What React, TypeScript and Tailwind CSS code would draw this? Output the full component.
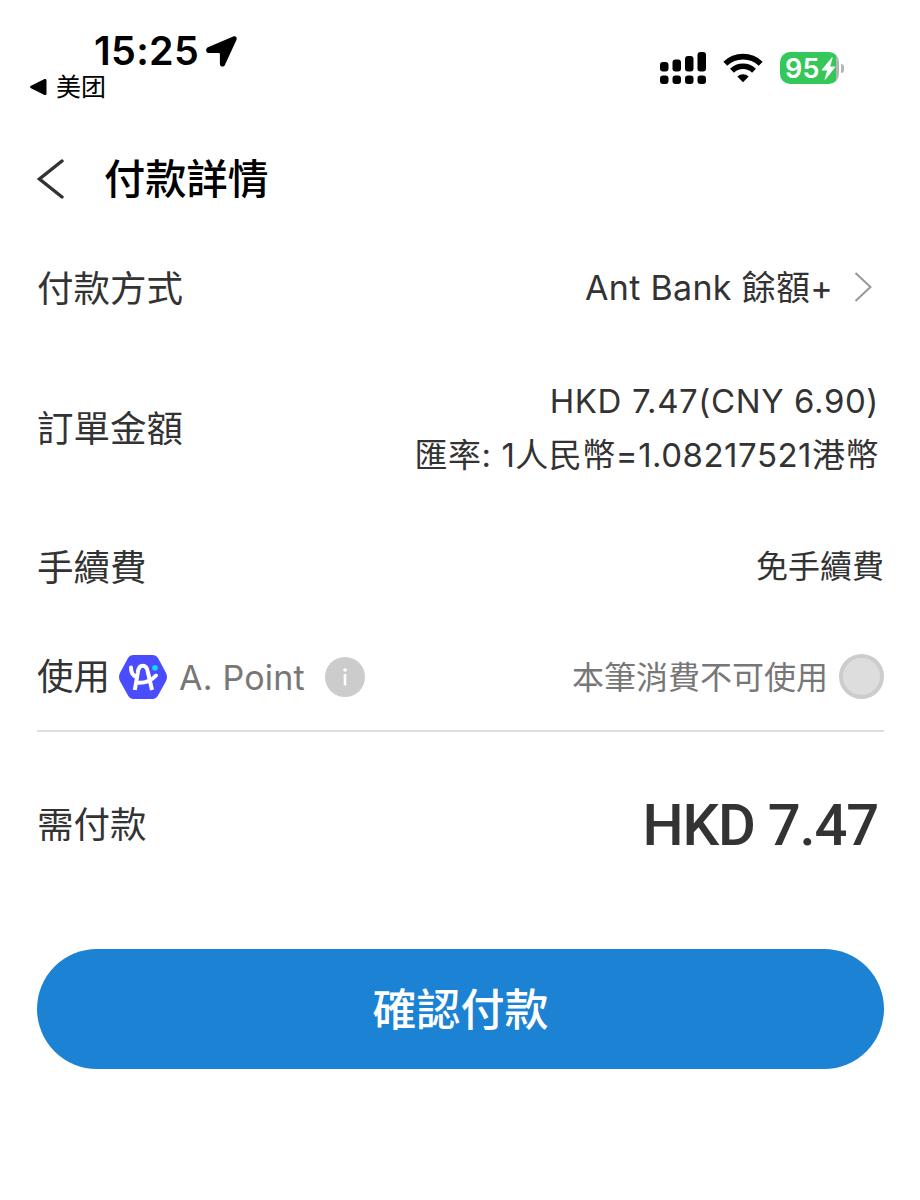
import type { ReactNode } from 'react';

function StatusBar() {
  return (
    <header className="flex h-[120px] justify-between pl-[30px] pr-[76px] text-black">
      <div className="pt-[31px]">
        <div className="flex h-10 items-center gap-[8px] pl-[64px]">
          <span className="w-[104px] whitespace-nowrap text-[39.5px] font-semibold leading-10 tracking-[0.3px]">15:25</span>
          <svg width="31" height="31" viewBox="0 0 31 31" fill="currentColor">
            <path d="M27.2.5 2 11.2C-.8 12.6-.3 17 2.6 17H12.6c.8 0 1.300.5 1.300 1.300V28c0 3 3.900 3.400 5 .9L30.500 3.800C31.400 1.500 29.800-.5 27.200.5Z" />
          </svg>
        </div>
        <div className="flex h-8 items-center gap-[9px]">
          <svg width="17" height="18" viewBox="0 0 17 18" fill="currentColor">
            <path d="M1 7.8 14 1.2c1.5-.7 2.5 0 2.5 1.4v12.8c0 1.4-1 2.1-2.5 1.4L1 10.2C-.2 9.6-.2 8.4 1 7.8Z" />
          </svg>
          <span className="-mt-[4px] font-['Noto_Sans_CJK_SC',sans-serif] text-[25px] leading-8">美团</span>
        </div>
      </div>
      <div className="flex h-[136px] items-center">
        <svg width="46" height="32" viewBox="0 0 46 32" fill="currentColor">
          <rect x="0" y="10" width="8.5" height="9.5" rx="3" />
          <rect x="12.5" y="7.5" width="8.5" height="12" rx="3" />
          <rect x="25" y="4" width="8.5" height="15.5" rx="3" />
          <rect x="37.5" y="0" width="8.5" height="19.5" rx="3" />
          <rect x="0" y="23.5" width="8.5" height="8.5" rx="3" />
          <rect x="12.5" y="23.5" width="8.5" height="8.5" rx="3" />
          <rect x="25" y="23.5" width="8.5" height="8.5" rx="3" />
          <rect x="37.5" y="23.5" width="8.5" height="8.5" rx="3" />
        </svg>
        <svg className="ml-[17px]" width="40" height="30" viewBox="0 0 40 30">
          <g fill="none" stroke="currentColor" strokeWidth="5.6">
            <path d="M2.3 10.8A25.5 25.5 0 0 1 37.7 10.8" />
            <path d="M9 17.7A15.8 15.8 0 0 1 31 17.7" />
          </g>
          <path d="M20 29.3 14.3 23.6A8.2 8.2 0 0 1 25.7 23.6Z" fill="currentColor" />
        </svg>
        <div className="ml-[17px] flex h-8 w-[59px] items-center rounded-[10px] bg-[linear-gradient(to_right,#34c759_95%,#b5b5b5_95%)] pl-[5px] text-white">
          <span className="pt-px text-[27px] font-semibold leading-8 tracking-[0.2px]">95</span>
          <svg className="ml-[1px] shrink-0" width="15" height="23" viewBox="0 0 15 23" fill="currentColor">
            <path d="M10.8.6 1 12.4c-.5.7-.3 1.1.4 1.1h4.7L3.7 21.8c-.3 1 .4 1.2 1 .5l9.4-11.7c.5-.7.3-1.1-.4-1.1H9.2l2.4-8.4c.2-.8-.3-1-.8-.5Z" />
          </svg>
        </div>
        <span className="ml-[2px] h-[9px] w-[3px] rounded-r-full bg-[#b5b5b5]" />
      </div>
    </header>
  );
}

function Label({ children }: { children: ReactNode }) {
  return <span className="pt-px text-[36.5px] leading-[54px] text-[#333]">{children}</span>;
}

function PointLogo() {
  return (
    <svg width="48" height="44" viewBox="0 0 48 44">
      <path
        d="M14.5 0h19c2.4 0 4.3 1 5.5 3l7.8 14.5c1.6 3 1.6 6 0 9L39 40.5c-1.2 2.2-3.1 3.5-5.5 3.5h-19c-2.4 0-4.3-1.3-5.5-3.5L1.2 26.5c-1.6-3-1.6-6 0-9L9 3c1.2-2 3.1-3 5.5-3Z"
        fill="#494cff"
      />
      <g fill="none" stroke="#fff" strokeWidth="4" strokeLinejoin="round">
        <path d="M12 12.5c0 5 2 8.7 6 9.3" strokeLinecap="round" />
        <path d="M15.8 35 18.8 17.500C20 8.500 27.500 8.500 29 17.500L33 35" />
        <path d="M18.500 27.800C25.500 28.300 32.500 25.500 37 20.500" strokeLinecap="round" />
      </g>
      <circle cx="36" cy="12.8" r="2.9" fill="#19d3f5" />
    </svg>
  );
}

export default function App() {
  return (
    <main className="h-[1200px] w-[920px] bg-white font-['Inter','Noto_Sans_CJK_TC',sans-serif]">
      <StatusBar />

      <div className="flex h-[118px] items-center pl-[37px]">
        <svg width="27" height="40" viewBox="0 0 27 40" fill="none" stroke="#333" strokeWidth="3.4" strokeLinecap="round">
          <path d="M25 2 2.5 20 25 38" />
        </svg>
        <h1 className="ml-[40px] text-[41.2px] font-medium leading-[60px] text-black">付款詳情</h1>
      </div>

      <section className="pl-[37px] pr-[36px]">
        <div className="flex h-[100px] items-center justify-between">
          <Label>付款方式</Label>
          <div className="flex items-center gap-[21px] pr-[12px] text-[#333]">
            <span className="text-[34px] leading-[54px] tracking-[0.3px]">Ant Bank 餘額+</span>
            <svg className="-mt-[2px]" width="18" height="30" viewBox="0 0 18 30" fill="none" stroke="#999" strokeWidth="2">
              <path d="M1.5 1 16.5 15 1.5 29" />
            </svg>
          </div>
        </div>

        <div className="flex h-[180px] items-center justify-between">
          <Label>訂單金額</Label>
          <div className="flex flex-col items-end pr-[5px] text-[33px] leading-[54px] text-[#333]">
            <span className="tracking-[0.6px]">HKD 7.47(CNY 6.90)</span>
            <span className="tracking-[0.5px]">匯率: 1人民幣=1.08217521港幣</span>
          </div>
        </div>

        <div className="flex h-[98px] items-center justify-between">
          <Label>手續費</Label>
          <span className="text-[32px] leading-[54px] text-[#333]">免手續費</span>
        </div>

        <div className="flex h-[116px] items-center justify-between border-b-2 border-[#dedede] pt-[7px]">
          <div className="flex items-center">
            <Label>使用</Label>
            <span className="ml-[9px]">
              <PointLogo />
            </span>
            <span className="ml-[12px] pt-[2px] text-[34px] leading-[54px] tracking-[0.2px] text-[#777]">A. Point</span>
            <svg className="ml-[20px]" width="40" height="40" viewBox="0 0 40 40">
              <circle cx="20" cy="20" r="20" fill="#ccc" />
              <circle cx="20" cy="13" r="1.8" fill="#fff" />
              <path d="M20 17v11.5" stroke="#fff" strokeWidth="2.6" />
            </svg>
          </div>
          <div className="flex items-center gap-[11px]">
            <span className="pt-[2px] text-[32px] leading-[54px] text-[#777]">本筆消費不可使用</span>
            <span className="size-[45px] rounded-full border-4 border-[#ccc] bg-[#ddd]" />
          </div>
        </div>

        <div className="flex h-[184px] items-center justify-between">
          <Label>需付款</Label>
          <span className="pr-[6px] pt-[2px] font-['Roboto',sans-serif] text-[58px] font-medium leading-[70px] tracking-[-1.2px] text-[#333]">
            HKD 7.47
          </span>
        </div>

        <button className="mt-[33px] flex h-[120px] w-full items-center justify-center rounded-full bg-[#1c82d3] pt-[2px] text-[44px] font-medium text-white">
          確認付款
        </button>
      </section>
    </main>
  );
}
